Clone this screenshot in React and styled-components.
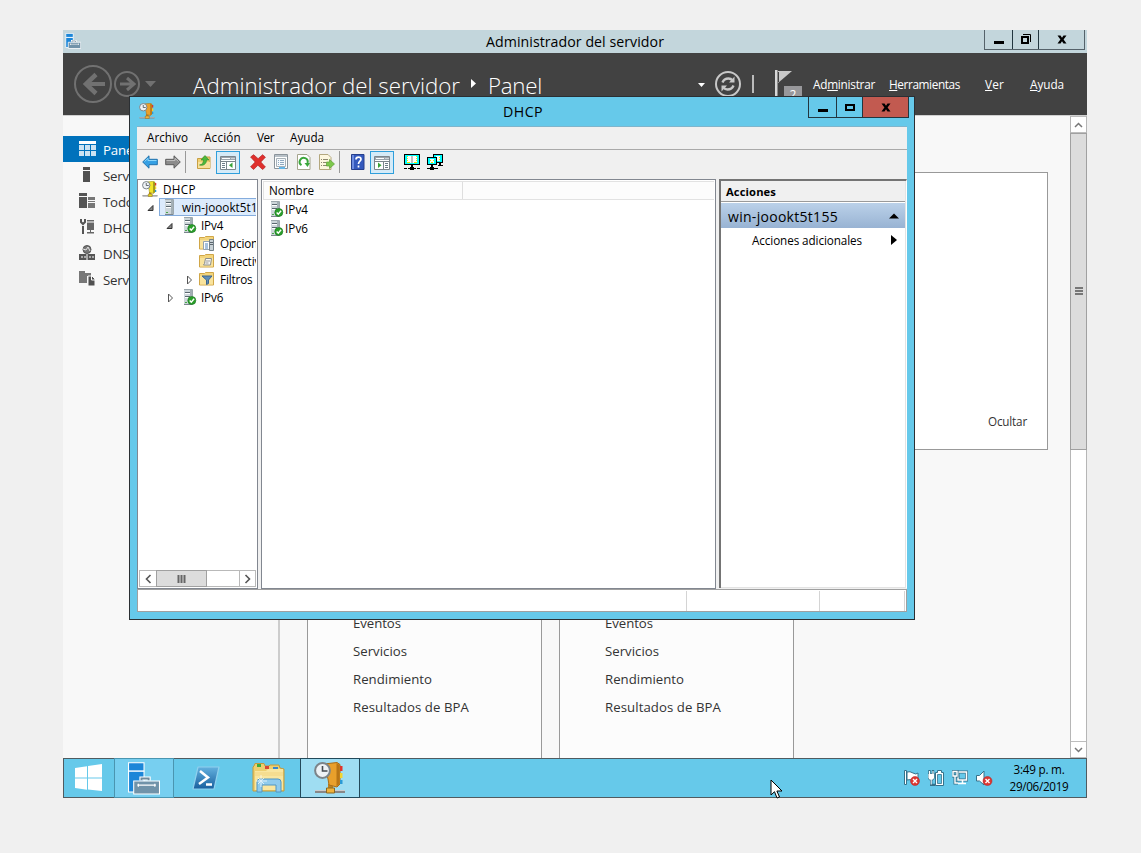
import React, { useLayoutEffect, useRef } from 'react';
import styled, { createGlobalStyle, css } from 'styled-components';

const Global = createGlobalStyle`
  *{box-sizing:border-box}
  html,body{margin:0;background:#f0f0f0}
  body{font-family:"Open Sans","Noto Sans",sans-serif;font-size:11.7px;color:#000;overflow:hidden}
  svg{display:block;flex:none}
`;

const Fitted = styled.span`
  display: inline-block;
  flex: none;
  white-space: nowrap;
  u { text-underline-offset: 1px; text-decoration-thickness: 1px; text-decoration-skip-ink: none; }
`;

/* Label whose tracking is adjusted so that it takes `w` pixels. */
function Fit({ w, children }) {
  const ref = useRef(null);
  useLayoutEffect(() => {
    const el = ref.current;
    el.style.letterSpacing = '0px';
    const natural = el.getBoundingClientRect().width;
    el.style.letterSpacing = `${(w - natural) / el.textContent.length}px`;
  }, [w]);
  return <Fitted ref={ref}>{children}</Fitted>;
}

const Desktop = styled.main`
  position: relative;
  width: 1141px;
  height: 853px;
  background: #f0f0f0;
  overflow: hidden;
`;
const Screen = styled.div`
  position: absolute;
  left: 63px;
  top: 30px;
  width: 1024px;
  height: 768px;
  display: flex;
  flex-direction: column;
`;
const ServerTitle = styled.header`
  height: 23px;
  flex: none;
  display: flex;
  justify-content: space-between;
  background: #c3d6dc;
  padding: 0 2px 0 2px;
`;
const TitleIcon = styled.div`
  width: 101px;
  padding: ${p => p.$top}px 0 0 ${p => p.$left || 0}px;
`;
const TitleText = styled.div`
  font-size: 14.2px;
  line-height: 23px;
  padding-top: ${p => p.$drop || 0}px;
`;
const WinButtons = styled.div`
  display: flex;
  height: ${p => p.$h}px;
  border: 1px solid ${p => p.$line};
  border-top: 0;
  flex: none;
`;
const WinButton = styled.div`
  width: ${p => p.$w}px;
  display: flex;
  justify-content: center;
  align-items: center;
  padding: 0 0 1px 0;
  background: ${p => p.$bg || 'transparent'};
  & + & { border-left: 1px solid ${p => p.$line}; }
`;
const Banner = styled.div`
  height: 62px;
  flex: none;
  display: flex;
  background: #424242;
  color: #fff;
  padding-left: 11px;
`;
const Crumb = styled.div`
  font-size: 22.3px;
  font-weight: 300;
  line-height: 30px;
  margin: 18px 0 0 ${p => p.$ml}px;
`;
const BannerMenu = styled.nav`
  display: flex;
  gap: ${p => p.$gap}px;
  margin: 23px 0 0 ${p => p.$ml}px;
  line-height: 16px;
  font-size: 11.8px;
`;
const Body = styled.div`
  flex: 1;
  min-height: 0;
  display: flex;
  background: #f8f8f8;
  border-top: 1px solid #d0d0d0;
`;
const Sidebar = styled.aside`
  width: 217px;
  flex: none;
  padding-top: 20px;
  border-right: 2px solid #cdcdcd;
`;
const SideItem = styled.div`
  height: 26px;
  display: flex;
  align-items: center;
  gap: 7px;
  padding-left: 16px;
  font-size: 13.3px;
  letter-spacing: -0.2px;
  white-space: nowrap;
  color: ${p => (p.$on ? '#fff' : '#333')};
  background: ${p => (p.$on ? '#0072bc' : 'transparent')};
  padding-top: 1px;
`;
const Main = styled.section`
  flex: 1;
  display: flex;
  flex-direction: column;
  justify-content: space-between;
  padding: 56px 22px 0 27px;
`;
const Welcome = styled.div`
  height: 278px;
  border: 1px solid #999;
  background: #fff;
  display: flex;
  justify-content: flex-end;
  align-items: flex-end;
  padding: 0 20px 20px 0;
  color: #333;
`;
const Tiles = styled.div`
  display: flex;
  gap: 17px;
  height: 188px;
`;
const Tile = styled.div`
  width: 235px;
  border: 1px solid #999;
  border-width: 0 1px;
  background: #fcfcfc;
  padding: 39px 0 0 45px;
  font-size: 13.2px;
  line-height: 28px;
  color: #333;
  div { height: 28px; }
`;
const VScroll = styled.div`
  width: 17px;
  border: 1px solid #b6b6b6;
  border-width: 0 1px;
  background: #fff;
  display: flex;
  flex-direction: column;
`;
const VButton = styled.div`
  height: 17px;
  flex: none;
  display: flex;
  align-items: center;
  justify-content: center;
  border: 1px solid #bdbdbd;
  border-width: 1px 0;
`;
const VThumb = styled.div`
  height: 317px;
  margin: 0 -1px auto;
  flex: none;
  background: #dcdcdc;
  border: 1px solid #a0a0a0;
  display: flex;
  align-items: center;
  justify-content: center;
`;

const Taskbar = styled.footer`
  height: 40px;
  flex: none;
  display: flex;
  background: #66c9ea;
  border: 1px solid #505b60;
`;
const TaskButton = styled.div`
  width: ${p => p.$w}px;
  margin: -1px 0;
  display: flex;
  align-items: center;
  justify-content: center;
  padding-right: ${p => p.$nudge || 0}px;
  ${p => p.$bg && css`background:${p.$bg};border:1px solid ${p.$line};`}
`;
const Tray = styled.div`
  margin-left: auto;
  display: flex;
  align-items: center;
  gap: 8px;
`;
const Clock = styled.div`
  width: 76px;
  margin: 0 9px 0 0;
  line-height: 17px;
  text-align: center;
`;

const Dhcp = styled.div`
  position: absolute;
  left: 129px;
  top: 96px;
  width: 786px;
  height: 524px;
  border: 1px solid #2b2f33;
  background: #66c9ea;
  display: flex;
  flex-direction: column;
  padding: 0 7px 7px;
`;
const DhcpTitle = styled.header`
  display: flex;
  justify-content: space-between;
  height: 29px;
  margin-right: -2px;
  flex: none;
`;
const Client = styled.div`
  flex: 1;
  min-height: 0;
  display: flex;
  flex-direction: column;
  background: #f0f0f0;
  border-top: 1px solid #7fb5cc;
`;
const MenuBar = styled.nav`
  display: flex;
  gap: 16px;
  height: 23px;
  flex: none;
  padding-left: 10px;
  line-height: 20px;
  border-bottom: 1px solid #a9a9a9;
`;
const ToolBar = styled.div`
  display: flex;
  align-items: center;
  height: 25px;
  flex: none;
  padding: 0 0 1px 5px;
`;
const Tool = styled.div`
  width: ${p => p.$w || 16}px;
  margin-left: ${p => p.$ml || 0}px;
  display: flex;
  justify-content: center;
  flex: none;
`;
const ToolToggle = styled(Tool)`
  height: 23px;
  align-items: center;
  border: 1px solid #2f9fdc;
  background: #d5ebf8;
`;
const ToolSep = styled.div`
  width: 1px;
  height: 22px;
  margin-left: ${p => p.$ml}px;
  background: #999;
`;
const Panes = styled.div`
  flex: 1;
  min-height: 0;
  display: flex;
  padding: 4px 0 0;
`;
const Pane = styled.div`
  width: ${p => p.$w}px;
  margin-right: 3px;
  border: 1px solid #828790;
  background: #fff;
  display: flex;
  flex-direction: column;
  overflow: hidden;
  flex: none;
`;
const Tree = styled.div`
  flex: 1;
  margin-right: 1px;
  overflow: hidden;
`;
const TreeRow = styled.div`
  height: 18px;
  display: flex;
  align-items: center;
  white-space: nowrap;
  letter-spacing: -0.15px;
`;
const Twisty = styled.div`
  width: 15px;
  margin-left: ${p => p.$ml}px;
  padding-top: 1px;
  flex: none;
`;
const TreeLabel = styled.div`
  display: flex;
  align-items: center;
  height: 18px;
  gap: ${p => p.$gap}px;
  margin-left: ${p => p.$ml || 0}px;
  ${p => p.$on && css`
    background:#dcebfc;border:1px solid #84acdd;width:98px;padding-left:4px;overflow:hidden;border-right:0;
  `}
`;
const HScroll = styled.div`
  height: 17px;
  margin: 0 1px 1px;
  flex: none;
  border: 1px solid #b9b9b9;
  display: flex;
`;
const HButton = styled.div`
  width: 16px;
  display: flex;
  align-items: center;
  justify-content: center;
  ${p => p.$end && css`margin-left:auto;border-left:1px solid #b9b9b9;`}
`;
const HThumb = styled.div`
  width: 51px;
  margin: -1px 0 -1px 0;
  background: #dcdcdc;
  border: 1px solid #a0a0a0;
  display: flex;
  align-items: center;
  justify-content: center;
`;
const ListHead = styled.div`
  display: flex;
  height: 19px;
  flex: none;
  margin: 1px 1px 0;
  background: #fcfcfc;
  border: 1px solid #e2e2e2;
  border-right: 0;
`;
const ListColumn = styled.div`
  width: 199px;
  padding-left: 5px;
  line-height: 17px;
  border-right: 1px solid #dedede;
`;
const ListRow = styled.div`
  display: flex;
  align-items: center;
  gap: 1px;
  height: 19px;
  padding: 0 0 1px 8px;
`;
const Actions = styled.div`
  width: 188px;
  border: 1px solid #8d8d8d;
  border-width: 2px 1px 0 2px;
  border-color: #747474 #fff #fff #747474;
  box-shadow: inset -1px -1px #e3e3e3;
  background: #fff;
  padding: 0 1px 1px 0;
  margin-bottom: 1px;
`;
const ActionsHead = styled.div`
  height: 21px;
  padding-left: 5px;
  line-height: 21px;
  font-weight: 700;
  font-size: 11.2px;
  background: #f0f0f0;
  border-bottom: 1px solid #9a9a9a;
`;
const ActionsGroup = styled.div`
  display: flex;
  justify-content: space-between;
  align-items: center;
  height: 25px;
  margin-top: 1px;
  padding: 1px 6px 0 7px;
  font-size: 14px;
  background: linear-gradient(#bbd1e9, #98b3d3);
`;
const ActionsItem = styled.div`
  display: flex;
  justify-content: space-between;
  align-items: center;
  height: 24px;
  padding: 0 8px 1px 31px;
`;
const Status = styled.div`
  height: 23px;
  flex: none;
  display: flex;
  background: #fff;
  border: 1px solid #a0a0a0;
  padding-top: 1px;
`;
const StatusCell = styled.div`
  width: ${p => p.$w}px;
  border-right: 1px solid #d4d4d4;
`;
const Pointer = styled.svg`
  position: absolute;
  left: 770px;
  top: 779px;
`;

/* ---------- glyphs ---------- */
const MinGlyph = () => <svg width="12" height="12"><path d="M1 8h10v3H1z" /></svg>;
const MaxGlyph = () => <svg width="12" height="12"><path d="M2 4h8v5H2z" fill="none" stroke="#000" strokeWidth="2" /></svg>;
const RestoreGlyph = () => (
  <svg width="12" height="12" fill="none" stroke="#000">
    <path d="M2 4h6v6H2z" strokeWidth="2" /><path d="M3 1.500h7.500V9" />
  </svg>
);
const CloseGlyph = () => <svg width="12" height="12"><path d="M1.500 2.500h3L6 4.700l1.500-2.200h3L7.600 6.500l2.900 4h-3L6 8.300l-1.500 2.200h-3l2.900-4z" /></svg>;

const ServerManagerIcon = ({ s = 16, lg }) => (
  <svg width={s} height={s} viewBox="0 0 32 32">
    <path d="M1.500.8h15v8h-15z" fill="#1c86d8" stroke="#fff" strokeWidth={lg ? 1 : 1.600} />
    <path d="M1.500 9h15v20h-15z" fill="#1c86d8" stroke="#fff" strokeWidth={lg ? 1 : 1.600} />
    <path d="M14 18v-2h7v2" fill="none" stroke="#fff" strokeWidth="4" />
    <path d="M14 18v-2h7v2" fill="none" stroke="#6f8b9d" strokeWidth="1.800" />
    <path d="M6.500 18.500h25V31h-25z" fill="#7193a9" stroke="#fff" strokeWidth={lg ? 1 : 1.600} />
    <path d="M10 22.500h18M11 21v3M27 21v3" stroke="#fff" strokeWidth="1.200" />
  </svg>
);
const DhcpIcon = ({ s = 16, yellow }) => (
  <svg width={s} height={s} viewBox="0 0 32 32">
    <path d="M1 28h30v3H1z" fill="#888" /><path d="M1 28h30v1H1z" fill="#ccc" />
    <path d="M14 22h5v6h-5z" fill="#b98322" /><path d="M12.500 26h8v5h-8z" fill={yellow ? '#e2d51c' : '#f0b23a'} stroke="#8c6820" />
    <path d="M10 2l13-1.500 3 2V22l-3 3-8-2-1-6z" fill={yellow ? '#f1e52a' : '#e9a02b'} stroke={yellow ? '#8d8518' : '#a86b17'} />
    <path d="M22.500 1l3 2v19l-3 2.500z" fill={yellow ? '#8d861c' : '#b87515'} />
    <path d="M26 4h2.500v5H26z" fill="#e0342b" /><path d="M26 11h2.500v5H26z" fill="#f3d530" /><path d="M26 18h2.500v4H26z" fill="#2b9ad6" />
    <circle cx="8.500" cy="8.500" r="7.400" fill="#eef2f5" stroke="#7c8489" strokeWidth="2" />
    <path d="M8.500 4v5h5" fill="none" stroke="#454b50" strokeWidth="1.600" />
  </svg>
);
const TowerPaths = () => (
  <>
    <path d="M1 .500h8V15H1z" fill="#a3afb5" /><path d="M1 1h6v14H1z" fill="#cdd6da" />
    <path d="M1 .500h8.500V15" fill="none" stroke="#9ca7ad" /><path d="M1 15.500h8.500" stroke="#7b868d" />
    <path d="M2 3.500h5M2 7.500h5" stroke="#5b6870" /><path d="M2 4.500h5M2 8.500h5" stroke="#fff" />
    <path d="M2 13.500h2" stroke="#4aa84a" />
  </>
);
const Tower = () => <svg width="11" height="16"><TowerPaths /></svg>;
const TowerOk = () => (
  <svg width="14" height="16">
    <TowerPaths /><circle cx="8.800" cy="11.500" r="4" fill="#2ba02b" stroke="#1d7a22" strokeWidth=".7" />
    <path d="M6.700 11.500l1.600 1.700 2.800-3.400" fill="none" stroke="#fff" strokeWidth="1.400" />
  </svg>
);
const Folder = ({ kind }) => (
  <svg width="16" height="16">
    <path d="M.500 2.500h5l1-1h8V14H.500z" fill="#f3d57c" stroke="#d0a648" /><path d="M1 5h13v8.500H1z" fill="#f9e39c" />
    {kind === 'options' && <><path d="M4.500 6.500h7v8h-7z" fill="#fff" stroke="#94a3b1" /><path d="M6 9h3M6 11h3M6 13h3" stroke="#4d83bd" /><path d="M10.500 4.500h4v11h-4z" fill="#c8d1d6" stroke="#75828a" /><path d="M11 7.500h3M11 9.500h3" stroke="#5b666d" /></>}
    {kind === 'policy' && <><path d="M6.500 5.500h6l-1 6.500h-7l1-1.500z" fill="#f8f8f4" stroke="#8b8d8a" /><path d="M7 8h4M6.500 10h3" stroke="#999" /></>}
    {kind === 'filter' && <path d="M3 5h10L9.500 9v3.500l-2 1V9z" fill="#5e8db8" stroke="#3c658d" />}
  </svg>
);
const Open = () => <svg width="8" height="8"><path d="M6 1.500v5H1z" fill="#888" stroke="#333" /></svg>;
const Closed = () => <svg width="8" height="10"><path d="M1.500 1v8l4-4z" fill="#fff" stroke="#555" /></svg>;
const Arrow = ({ blue }) => (
  <svg width="16" height="14" viewBox="0 0 16 14">
    <g transform={blue ? undefined : 'translate(16 0) scale(-1 1)'}>
      <path d="M.7 7L7 .800v3.500h8.300v5.400H7v3.500z" fill={blue ? '#36a0e4' : '#8b8b8b'} stroke={blue ? '#2272ad' : '#5b5b5b'} />
      <path d="M2.500 6.500L6 3.300v2.200h8.500" fill="none" stroke={blue ? '#8cd7fb' : '#bdbdbd'} />
    </g>
  </svg>
);
const FolderUp = () => (
  <svg width="16" height="16">
    <path d="M1.500 4.500h5l1-1.500h6.500v11.500H1.500z" fill="#f0cf72" stroke="#c79f43" /><path d="M2 8h12v6H2z" fill="#f8e09a" />
    <path d="M3.500 11c3-.5 4-2.500 4-5H5l4-4.500L13 6h-2.500c0 4-3 6-7 5z" fill="#4cb83c" stroke="#2b8b26" strokeWidth=".6" />
  </svg>
);
const PaneIcon = ({ right }) => (
  <svg width="16" height="15">
    <path d="M.500 1.500h15v13H.500z" fill="#fff" stroke="#7c858c" /><path d="M1 2h14v3H1z" fill="#9ba5ad" />
    <path d="M2 3.500h8M11.500 3.500h1M13.500 3.500h1" stroke="#fff" />
    <path d={right ? 'M1 6.500h14M9.500 6v8' : 'M1 6.500h14M6.500 6v8'} stroke="#7c858c" />
    <path d={right ? 'M11 8.500h3M11 10.500h3M11 12.500h3' : 'M2 8.500h3M2 10.500h3M2 12.500h3'} stroke="#6f7c87" />
    <path d={right ? 'M4 7.500v5.500l3.500-2.800z' : 'M12.500 7.500v5.500L9 10.200z'} fill="#38a338" />
  </svg>
);
const Delete = () => <svg width="16" height="16"><path d="M.6 3l3-2.300 4.500 4L12.600.7l2.800 2.500L10.800 8l4.600 5-2.800 2.500-4.700-4.300-4.300 4.300-3-2.700L5.200 8z" fill="#e0302d" stroke="#b32324" strokeWidth=".7" /></svg>;
const Props = () => (
  <svg width="16" height="16">
    <path d="M1.500.500h13v14h-13z" fill="#fff" stroke="#8a939a" /><path d="M2 2h12" stroke="#b7c0c7" strokeWidth="2" />
    <path d="M3.500 4.500h9v8h-9z" fill="#f5f9fc" stroke="#a7b1b8" /><path d="M5 6.500h1M7 6.500h4M5 8.500h1M7 8.500h4M5 10.500h1M7 10.500h4" stroke="#8fa9c0" /><path d="M6 14h6" stroke="#64b6e8" strokeWidth="2" />
  </svg>
);
const Refresh = () => (
  <svg width="16" height="16">
    <path d="M1.500.500H11l3 3v12H1.500z" fill="#fff" stroke="#a4a48c" /><path d="M5.500 11.200A4 4 0 1 1 11.500 9" fill="none" stroke="#3aa63b" strokeWidth="2" /><path d="M8.500 9h5.500l-2.500 4z" fill="#3aa63b" />
  </svg>
);
const Export = () => (
  <svg width="16" height="16">
    <path d="M.500.500H9l3 3v12H.500z" fill="#fdf7df" stroke="#b3a77e" /><path d="M2 5.500h1M4 5.500h5M2 8.500h1M4 8.500h3M2 11.500h1M4 11.500h4" stroke="#8d886f" />
    <path d="M7.500 8H10.500V5.500l5 4.500-5 4.500V12h-3z" fill="#7dc84c" stroke="#5c9d35" strokeWidth=".7" />
  </svg>
);
const Help = () => (
  <svg width="14" height="16">
    <path d="M.500.500h12.500v15H.500z" fill="#3459bd" stroke="#263f8c" /><path d="M1 1h2v14H1z" fill="#6d8ce0" />
    <path d="M5 5.500c0-3.300 5-3 5-.3C10 7.300 7.500 7 7.500 10M7.500 11.500v2" fill="none" stroke="#fff" strokeWidth="1.700" />
  </svg>
);
const Monitor = () => (
  <svg width="16" height="16" shapeRendering="crispEdges">
    <path d="M0 0h16v11H0z" /><path d="M1 1h14v9H1z" fill="#0ff" />
    <path d="M3 2h4v7H3zM9 2h4v7H9z" fill="#fff" /><path d="M7 2h2v7H7z" fill="#c0c0c0" />
    <path d="M3 2h1v1H3zM12 2h1v1h-1zM3 4h1v1H3zM12 4h1v1h-1zM3 6h1v1H3zM12 6h1v1h-1zM3 8h3v1H3zM10 8h3v1h-3z" fill="#f0e800" />
    <path d="M7 11h2v2H7zM6 13h4v3H6zM0 14h3v1H0zM13 14h3v1h-3zM4 14h8v1H4z" />
  </svg>
);
const Monitors = () => (
  <svg width="16" height="16" shapeRendering="crispEdges">
    <path d="M6 0h10v9H6z" /><path d="M7 1h8v7H7z" fill="#0ff" /><path d="M9 2h4v5H9z" fill="#fff" /><path d="M12 3h1v1h-1zM12 5h1v1h-1z" fill="#f0e800" />
    <path d="M0 3h10v8H0z" /><path d="M1 4h8v6H1z" fill="#0ff" /><path d="M3 5h4v4H3z" fill="#fff" /><path d="M3 6h1v1H3zM6 6h1v1H6zM4 8h2v1H4z" fill="#f0e800" />
    <path d="M4 11h2v2H4zM3 13h4v3H3zM12 9h2v2h-2zM11 11h5v1h-5zM0 14h11v1H0z" />
  </svg>
);

const sideIcons = {
  panel: <svg width="17" height="17" fill="#fff"><path d="M0 0h17v3H0z" /><path d="M0 4h5v5H0zM0 10h5v5H0zM6 4h5v5H6zM12 4h5v5h-5zM6 10h5v5H6zM12 10h5v5h-5z" opacity=".8" /></svg>,
  local: <svg width="17" height="17" fill="#505050"><path d="M4 0h7v3H4zM4 4h7v11H4z" /></svg>,
  all: <svg width="17" height="17"><path d="M0 0h8v3H0zM0 4h8v11H0z" fill="#555" /><path d="M9 4h7v3H9zM9 8h7v1H9zM9 10h7v5H9z" fill="#777" /></svg>,
  dhcp: <svg width="17" height="17"><path d="M4 15V7M2 0v3l2 2 2-2V0" fill="none" stroke="#555" strokeWidth="2" /><path d="M8 1h7v10H8zM11 11h1v3h-1zM8 13h7v1.500H8z" fill="#666" /><path d="M8 3h7" stroke="#fff" /></svg>,
  dns: <svg width="17" height="17"><circle cx="8" cy="4.500" r="4" fill="#777" stroke="#555" /><path d="M4 4l3 1 2-3 2 4" fill="none" stroke="#e5e5e5" /><path d="M0 9h16v6H0z" fill="#555" /><path d="M2 12h2M5 12h2M10 12h2M13 12h2M8 9v6" stroke="#fff" /></svg>,
  files: <svg width="17" height="17"><path d="M0 0h6v2h6v3H0zM0 5h8v7H0z" fill="#777" /><path d="M9 5h4l3 3v7H9z" fill="#505050" stroke="#f8f8f8" /><path d="M12.500 5v4H16" fill="none" stroke="#f8f8f8" /></svg>,
};
const side = [['panel', 'Panel'], ['local', 'Servidor local'], ['all', 'Todos los servidores'], ['dhcp', 'DHCP'], ['dns', 'DNS'], ['files', 'Servicios de archivos']];
const roles = [['Eventos', 48], ['Servicios', 54], ['Rendimiento', 79], ['Resultados de BPA', 116]];

const NavArrows = () => (
  <svg width="90" height="60" viewBox="0 0 90 60" fill="none" stroke="#717171">
    <circle cx="19" cy="31" r="18" strokeWidth="2" /><path d="M11 31h20" strokeWidth="4" /><path d="M22 21.500l-10 9.500 10 9.500" strokeWidth="4.500" />
    <circle cx="53" cy="31" r="12" strokeWidth="2" /><path d="M46 31h13M53 25l7 6-7 6" strokeWidth="3" />
    <path d="M71 28h11l-5.500 6z" fill="#717171" stroke="none" />
  </svg>
);
const BannerTools = () => (
  <svg width="110" height="60" viewBox="0 0 110 60">
    <path d="M4 30h7l-3.500 4z" fill="#fff" />
    <g fill="none" stroke="#c8c8c8"><circle cx="34" cy="31" r="12" strokeWidth="2" /><path d="M28.500 29.500q1.500-4 6-4 2.500 0 4 2M39.500 32.500q-1.500 4-6 4-2.500 0-4-2" strokeWidth="2.400" /></g>
    <path d="M40.500 23.500v6H35zM27.500 38.500v-6H33z" fill="#c8c8c8" />
    <path d="M58 22h2v18h-2z" fill="#bbb" />
    <path d="M81 17h2.500v26H81z" fill="#d7d7d7" /><path d="M84 18h14L84 30z" fill="#c8c8c8" /><path d="M84.500 19v10" stroke="#424242" />
    <path d="M90 33h18v18H90z" fill="#98989b" /><text x="99" y="46" fontSize="12" textAnchor="middle" fill="#fff">2</text>
  </svg>
);

const WindowsLogo = () => <svg width="28" height="28" fill="#fff"><path d="M0 4l12-1.800v11.300H0zM13 2l14-2v13.500H13zM0 14.500h12v11.300L0 24zM13 14.500h14V27l-14-1.500z" /></svg>;
const PowerShell = () => (
  <svg width="28" height="24">
    <defs><linearGradient id="ps" x2="0" y2="1"><stop stopColor="#63b1df" /><stop offset="1" stopColor="#195f9e" /></linearGradient></defs>
    <path d="M6 1h21l-5 22H1z" fill="url(#ps)" stroke="#8fd0ee" strokeLinejoin="round" strokeWidth="1.200" /><path d="M8 5l8 6.500L7 18M14 18.500h6" fill="none" stroke="#fff" strokeWidth="2.500" />
  </svg>
);
const Explorer = () => (
  <svg width="34" height="32">
    <path d="M2 4l1-2.500h9L13 4h4l1-1h9l1 3 4 1v22H1V5z" fill="#edcf70" stroke="#c29a3d" />
    <path d="M5 2h4v3H5z" fill="#3cab3e" /><path d="M13 4h4v3h-4z" fill="#d84734" /><path d="M21 5h5v3h-5z" fill="#3686cd" />
    <path d="M3 9h11l2-2h15v21H3z" fill="#f9e6a0" /><path d="M3 13h28M3 11h28" stroke="#f2d480" />
    <path d="M5 30V20q0-3 3-3h18q3 0 3 3v10h-5v-7H10v7z" fill="#8fcbed" stroke="#5096c3" /><path d="M9 13v12M4 19h11M6 16l6 6M12 16l-6 6" stroke="#fff" opacity=".7" />
  </svg>
);
const RedX = ({ x, y }) => <g><circle cx={x} cy={y} r="4.500" fill="#dc3832" stroke="#b91e20" strokeWidth=".5" /><path d={`M${x - 2} ${y - 2}l4 4m0-4l-4 4`} stroke="#fff" strokeWidth="1.400" /></g>;
const TrayFlag = () => <svg width="16" height="16"><path d="M.500.500h2v14h-2z" fill="#fff" stroke="#35718a" /><path d="M3 2q3-1 6 1t5 0v8q-3 1-5-.5T3 10z" fill="#fff" stroke="#35718a" /><RedX x={11} y={11} /></svg>;
const TrayPower = () => (
  <svg width="16" height="16">
    <path d="M1.500 0v4M5 0v4M3.200 10v5h4" stroke="#35718a" strokeWidth="2.400" fill="none" /><path d="M0 3.500h6.500V8L5 10H1.500L0 8z" fill="#fff" stroke="#35718a" strokeWidth=".8" />
    <path d="M1.500 1v3M5 1v3M3.200 9v5.500" stroke="#fff" />
    <path d="M7.500 2.500h2v-2h4v2h2v13h-8z" fill="#fff" stroke="#35718a" /><path d="M9.500 4.500h4v9h-4z" fill="#66c9ea" stroke="#35718a" strokeWidth=".8" />
  </svg>
);
const TrayNet = () => <svg width="16" height="16" fill="none" stroke="#35718a"><path d="M6 2h8.500v8H6z" stroke="#35718a" strokeWidth="3" /><path d="M6 2h8.500v8H6zM10.500 10v3M6 13.500h8" stroke="#fff" strokeWidth="1.500" /><path d="M1 1.500h4V6H1zM3 6v7h3" fill="#66c9ea" stroke="#35718a" strokeWidth="3" /><path d="M1 1.500h4V6H1zM3 6v7h3" stroke="#fff" strokeWidth="1.400" /></svg>;
const TraySound = () => <svg width="17" height="16"><path d="M.500 5.500h3L8 1v14l-4.500-4h-3z" fill="#fff" stroke="#35718a" /><RedX x={11.500} y={11} /></svg>;

const treeItems = [
  { twisty: <Open />, tml: 28, icon: <TowerOk />, ml: 2, gap: 4, text: 'IPv4' },
  { icon: <Folder kind="options" />, ml: 61, gap: 5, text: 'Opciones de servidor' },
  { icon: <Folder kind="policy" />, ml: 61, gap: 5, text: 'Directivas' },
  { twisty: <Closed />, tml: 48, icon: <Folder kind="filter" />, ml: -2, gap: 5, text: 'Filtros' },
  { twisty: <Closed />, tml: 29, icon: <TowerOk />, ml: 1, gap: 4, text: 'IPv6' },
];

function ServerManager() {
  return (
    <>
      <ServerTitle>
        <TitleIcon $top={3}><ServerManagerIcon /></TitleIcon>
        <TitleText><Fit w={178}>Administrador del servidor</Fit></TitleText>
        <WinButtons $h={20} $line="#55626a">
          <WinButton $w={27}><MinGlyph /></WinButton>
          <WinButton $w={26} $line="#55626a"><RestoreGlyph /></WinButton>
          <WinButton $w={46} $line="#55626a"><CloseGlyph /></WinButton>
        </WinButtons>
      </ServerTitle>
      <Banner>
        <NavArrows />
        <Crumb $ml={29}><Fit w={267}>Administrador del servidor</Fit></Crumb>
        <Crumb $ml={10}><svg width="8" height="30"><path d="M1 8v9l5-4.500z" fill="#fff" /></svg></Crumb>
        <Crumb $ml={10}><Fit w={54}>Panel</Fit></Crumb>
        <Crumb $ml={152} />
        <BannerTools />
        <BannerMenu $ml={9} $gap={14}>
          <Fit w={62}>Ad<u>m</u>inistrar</Fit>
          <Fit w={71}><u>H</u>erramientas</Fit>
        </BannerMenu>
        <BannerMenu $ml={25} $gap={26}>
          <Fit w={19}><u>V</u>er</Fit>
          <Fit w={34}><u>A</u>yuda</Fit>
        </BannerMenu>
      </Banner>
      <Body>
        <Sidebar>
          {side.map(([k, t], i) => <SideItem key={k} $on={i === 0}>{sideIcons[k]}{t}</SideItem>)}
        </Sidebar>
        <Main>
          <Welcome><Fit w={39}>Ocultar</Fit></Welcome>
          <Tiles>
            {[0, 1].map(n => <Tile key={n}>{roles.map(([t, w]) => <div key={t}><Fit w={w}>{t}</Fit></div>)}</Tile>)}
          </Tiles>
        </Main>
        <VScroll>
          <VButton><svg width="9" height="6"><path d="M1 5l3.500-3.500L8 5" fill="none" stroke="#777" strokeWidth="1.500" /></svg></VButton>
          <VThumb><svg width="9" height="9"><path d="M1 1h8M1 4h8M1 7h8" stroke="#777" strokeWidth="2" /></svg></VThumb>
          <VButton><svg width="9" height="6"><path d="M1 1l3.500 3.500L8 1" fill="none" stroke="#777" strokeWidth="1.500" /></svg></VButton>
        </VScroll>
      </Body>
    </>
  );
}

function DhcpWindow() {
  return (
    <Dhcp>
      <DhcpTitle>
        <TitleIcon $top={6} $left={2}><DhcpIcon s={16} /></TitleIcon>
        <TitleText $drop={3}><Fit w={40}>DHCP</Fit></TitleText>
        <WinButtons $h={21} $line="#22363f">
          <WinButton $w={27}><MinGlyph /></WinButton>
          <WinButton $w={26} $line="#22363f"><MaxGlyph /></WinButton>
          <WinButton $w={46} $line="#22363f" $bg="#c25a50"><CloseGlyph /></WinButton>
        </WinButtons>
      </DhcpTitle>
      <Client>
        <MenuBar><Fit w={41}>Archivo</Fit><Fit w={37}>Acción</Fit><Fit w={17}>Ver</Fit><Fit w={34}>Ayuda</Fit></MenuBar>
        <ToolBar>
          <Tool><Arrow blue /></Tool><Tool $ml={7}><Arrow /></Tool>
          <ToolSep $ml={4} />
          <Tool $ml={10}><FolderUp /></Tool>
          <ToolToggle $ml={4} $w={24}><PaneIcon /></ToolToggle>
          <Tool $ml={10}><Delete /></Tool><Tool $ml={7}><Props /></Tool><Tool $ml={7}><Refresh /></Tool><Tool $ml={7}><Export /></Tool>
          <ToolSep $ml={4} />
          <Tool $ml={10}><Help /></Tool>
          <ToolToggle $ml={4} $w={24}><PaneIcon right /></ToolToggle>
          <Tool $ml={10}><Monitor /></Tool><Tool $ml={7}><Monitors /></Tool>
        </ToolBar>
        <Panes>
          <Pane $w={121}>
            <Tree>
              <TreeRow><TreeLabel $ml={4} $gap={5}><DhcpIcon yellow /><Fit w={33}>DHCP</Fit></TreeLabel></TreeRow>
              <TreeRow><Twisty $ml={9}><Open /></Twisty><TreeLabel $on $ml={-3} $gap={7}><Tower /><Fit w={89}>win-joookt5t155</Fit></TreeLabel></TreeRow>
              {treeItems.map(it => (
                <TreeRow key={it.text}>
                  {it.twisty && <Twisty $ml={it.tml}>{it.twisty}</Twisty>}
                  <TreeLabel $ml={it.ml} $gap={it.gap}>{it.icon}{it.text}</TreeLabel>
                </TreeRow>
              ))}
            </Tree>
            <HScroll>
              <HButton><svg width="7" height="10"><path d="M5.500 1L1.500 5l4 4" fill="none" stroke="#555" strokeWidth="1.600" /></svg></HButton>
              <HThumb><svg width="9" height="8"><path d="M1.500 0v8M4.500 0v8M7.500 0v8" stroke="#666" strokeWidth="2" /></svg></HThumb>
              <HButton $end><svg width="7" height="10"><path d="M1.500 1l4 4-4 4" fill="none" stroke="#555" strokeWidth="1.600" /></svg></HButton>
            </HScroll>
          </Pane>
          <Pane $w={455}>
            <ListHead><ListColumn><Fit w={45}>Nombre</Fit></ListColumn></ListHead>
            <ListRow><TowerOk /><Fit w={23}>IPv4</Fit></ListRow>
            <ListRow><TowerOk /><Fit w={23}>IPv6</Fit></ListRow>
          </Pane>
          <Actions>
            <ActionsHead><Fit w={50}>Acciones</Fit></ActionsHead>
            <ActionsGroup><Fit w={110}>win-joookt5t155</Fit><svg width="10" height="6"><path d="M0 5.500L5 .500l5 5z" /></svg></ActionsGroup>
            <ActionsItem><Fit w={110}>Acciones adicionales</Fit><svg width="6" height="10"><path d="M0 0v10l6-5z" /></svg></ActionsItem>
          </Actions>
        </Panes>
        <Status><StatusCell $w={549} /><StatusCell $w={133} /><StatusCell $w={85} /></Status>
      </Client>
    </Dhcp>
  );
}

export default function App() {
  return (
    <Desktop>
      <Global />
      <Screen>
        <ServerManager />
        <Taskbar>
          <TaskButton $w={50} $nudge={1}><WindowsLogo /></TaskButton>
          <TaskButton $w={60} $bg="#77cff0" $line="#4a95b0" $nudge={1}><ServerManagerIcon s={33} lg /></TaskButton>
          <TaskButton $w={64}><PowerShell /></TaskButton>
          <TaskButton $w={62}><Explorer /></TaskButton>
          <TaskButton $w={60} $bg="#9fddf2" $line="#23495a"><DhcpIcon s={32} /></TaskButton>
          <Tray>
            <TrayFlag /><TrayPower /><TrayNet /><TraySound />
            <Clock><Fit w={51}>3:49 p. m.</Fit><Fit w={59}>29/06/2019</Fit></Clock>
          </Tray>
        </Taskbar>
      </Screen>
      <DhcpWindow />
      <Pointer width="14" height="20"><path d="M1 1v15l3.500-3.300L7 19l2.500-1-2.600-6H12z" fill="#fff" stroke="#000" /></Pointer>
    </Desktop>
  );
}
